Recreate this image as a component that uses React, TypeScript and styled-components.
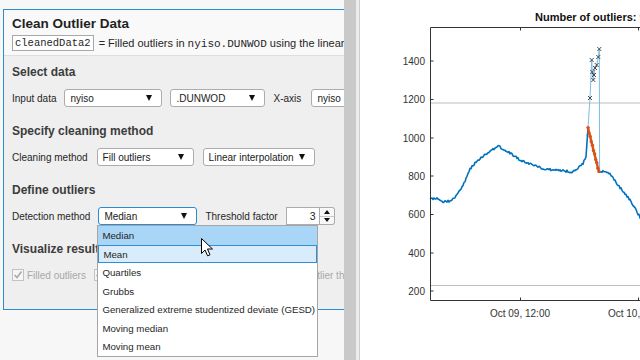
import React from 'react';
import styled, { createGlobalStyle } from 'styled-components';

const GlobalStyle = createGlobalStyle`
  html, body {
    margin: 0;
    padding: 0;
    background: #ffffff;
  }
  body {
    font-family: 'Liberation Sans', Arial, sans-serif;
    color: #262626;
  }
`;

const Page = styled.div`
  display: flex;
  width: 640px;
  height: 360px;
  overflow: hidden;
`;

const LeftPane = styled.div`
  position: relative;
  flex: 0 0 344px;
  height: 100%;
  overflow: hidden;
  box-sizing: border-box;
  padding: 9px 0 0 3px;
  background: #f7f7f7;
`;

const Card = styled.section`
  position: relative;
  height: 301px;
  box-sizing: border-box;
  background: #efefef;
  border: 1px solid #2b8dd0;
  border-right: none;
`;

const Header = styled.header`
  height: 46px;
  box-sizing: border-box;
  padding: 5px 0 3px 8px;
  background: #f9f9f9;
  border-bottom: 1px solid #dedede;
`;

const Title = styled.h1`
  margin: 0;
  font-size: 13.5px;
  line-height: 18px;
  font-weight: bold;
  color: #1f1f1f;
`;

const Summary = styled.div`
  display: flex;
  align-items: center;
  gap: 5px;
  height: 18px;
  margin-top: 1px;
  font-size: 11px;
  white-space: nowrap;
  color: #262626;
`;

const VarBox = styled.span`
  display: inline-block;
  height: 16px;
  line-height: 15px;
  box-sizing: border-box;
  padding: 0 2px;
  border: 1px solid #a8a8a8;
  background: #ffffff;
  font-family: 'Liberation Mono', 'Courier New', monospace;
  font-size: 10.5px;
`;

const Code = styled.span`
  font-family: 'Liberation Mono', 'Courier New', monospace;
  font-size: 11px;
`;

const Body = styled.div`
  padding: 8px 0 0 8px;
`;

const Section = styled.div`
  & + & {
    margin-top: 16px;
  }
`;

const Heading = styled.h2`
  margin: 0;
  font-size: 12px;
  line-height: 16px;
  font-weight: bold;
  color: #3c3c3c;
  white-space: nowrap;
`;

const Row = styled.div<{ $gap: number }>`
  display: flex;
  align-items: center;
  gap: ${(p) => p.$gap}px;
  height: 18px;
  margin-top: 9px;
  white-space: nowrap;
`;

const Label = styled.span<{ $w?: number }>`
  flex: 0 0 ${(p) => (p.$w ? `${p.$w}px` : 'auto')};
  font-size: 10px;
  color: #262626;
`;

const Select = styled.div<{ $w: number; $focus?: boolean }>`
  position: relative;
  flex: 0 0 ${(p) => p.$w}px;
  display: flex;
  align-items: center;
  justify-content: space-between;
  height: 18px;
  box-sizing: border-box;
  padding: 0 5px 0 5px;
  border: 1px solid ${(p) => (p.$focus ? '#2a8ad4' : '#acacac')};
  border-radius: 3px;
  background: #ffffff;
  font-size: 10px;
  color: #1a1a1a;
`;

const Arrow = styled.span`
  width: 0;
  height: 0;
  border-left: 3.5px solid transparent;
  border-right: 3.5px solid transparent;
  border-top: 6px solid #111111;
  margin-right: 4px;
`;

const Spinner = styled.div`
  display: flex;
  height: 18px;
`;

const SpinInput = styled.div`
  width: 34px;
  box-sizing: border-box;
  padding-right: 3px;
  border: 1px solid #acacac;
  background: #ffffff;
  font-size: 10.5px;
  line-height: 16px;
  text-align: right;
`;

const SpinButtons = styled.div`
  display: flex;
  flex-direction: column;
  width: 15px;
  box-sizing: border-box;
  border: 1px solid #acacac;
  border-left: none;
  border-radius: 0 3px 3px 0;
  background: #f8f8f8;
`;

const SpinHalf = styled.div<{ $down?: boolean }>`
  flex: 1;
  display: flex;
  align-items: center;
  justify-content: center;
  border-top: ${(p) => (p.$down ? '1px solid #c8c8c8' : 'none')};

  &::after {
    content: '';
    border-left: 3px solid transparent;
    border-right: 3px solid transparent;
    ${(p) =>
      p.$down ? 'border-top: 4px solid #111;' : 'border-bottom: 4px solid #111;'}
  }
`;

const Menu = styled.ul`
  position: absolute;
  top: 17px;
  left: -2px;
  z-index: 5;
  width: 221px;
  margin: 0;
  padding: 0;
  list-style: none;
  box-sizing: border-box;
  border: 1px solid #a5a5a5;
  background: #ffffff;
`;

const MenuItem = styled.li<{ $state?: 'selected' | 'hover' }>`
  height: 18.5px;
  box-sizing: border-box;
  padding-left: 4px;
  font-size: 9.7px;
  line-height: 18px;
  color: #262626;
  background: ${(p) =>
    p.$state === 'selected' ? '#a9d6f7' : p.$state === 'hover' ? '#d8ecfb' : '#ffffff'};
  border: 1px solid ${(p) => (p.$state === 'hover' ? '#2f8fd9' : 'transparent')};
  border-left-width: ${(p) => (p.$state === 'hover' ? '1px' : '0')};
`;

const Cursor = styled.svg`
  position: absolute;
  left: 102px;
  top: 30px;
  z-index: 6;
`;

const CheckItem = styled.span<{ $ml?: number }>`
  display: inline-flex;
  align-items: center;
  gap: 3px;
  margin-left: ${(p) => p.$ml ?? 0}px;
  font-size: 10px;
  color: #a8a8a8;
`;

const CheckBox = styled.span`
  display: inline-flex;
  align-items: center;
  justify-content: center;
  width: 12px;
  height: 12px;
  box-sizing: border-box;
  border: 1px solid #c2c2c2;
  background: #f6f6f6;
`;

const ScrollTrack = styled.div`
  flex: 0 0 12px;
  background: #c9c9c9;
`;

const Gutter = styled.div`
  flex: 0 0 3px;
  background: #ececec;
  border-right: 1px solid #cdcdcd;
`;

const ChartPane = styled.div`
  flex: 1;
  background: #ffffff;
`;

const Check = () => (
  <CheckBox>
    <svg width="10" height="10" viewBox="0 0 10 10">
      <path d="M1.5 5 L4 7.5 L8.5 1.5" fill="none" stroke="#a8a8a8" strokeWidth="1.6" />
    </svg>
  </CheckBox>
);

// deterministic jitter for the signal
const jitter = (i: number) => {
  const s = Math.sin(i * 127.1 + 11.7) * 43758.5453;
  return (s - Math.floor(s)) * 2 - 1;
};

const interp = (keys: [number, number][], x: number) => {
  for (let k = 0; k < keys.length - 1; k++) {
    const [x0, y0] = keys[k];
    const [x1, y1] = keys[k + 1];
    if (x >= x0 && x <= x1) return y0 + ((y1 - y0) * (x - x0)) / (x1 - x0);
  }
  return keys[keys.length - 1][1];
};

const leftKeys: [number, number][] = [
  [430, 199], [436, 198], [443, 202], [450, 201], [455, 197], [460, 191],
  [465, 181], [470, 169], [476, 162], [483, 156], [490, 151], [498, 146],
  [505, 150], [513, 155], [520, 160], [527, 163], [535, 166], [545, 169],
  [555, 170], [565, 171], [572, 172], [578, 168], [583, 164], [586, 156],
  [588, 128],
];

const rightKeys: [number, number][] = [
  [599, 172], [603, 171], [607, 172], [612, 176], [617, 184], [622, 190],
  [627, 196], [632, 203], [636, 210], [641, 219],
];

const buildLine = (keys: [number, number][], seed: number) => {
  const pts: string[] = [];
  const x0 = keys[0][0];
  const x1 = keys[keys.length - 1][0];
  for (let x = x0; x <= x1; x += 1) {
    const edge = x === x0 || x === x1;
    const y = interp(keys, x) + (edge ? 0 : jitter(x + seed) * 1.1);
    pts.push(`${x},${y.toFixed(1)}`);
  }
  return pts.join(' ');
};

const outlierMarks: [number, number][] = [
  [590, 98], [591.7, 60], [592.3, 72], [593.3, 80], [594, 75], [595, 68],
  [596.7, 65], [598.3, 57], [599.3, 49],
];

const rawLine =
  '587,136 588,128 590,98 591.7,60 592.3,72 593.3,80 594,75 595,68 596.7,65 598.3,57 599.3,49 599.6,171';

const yTicks: [string, number][] = [
  ['1400', 61], ['1200', 99.5], ['1000', 138], ['800', 176],
  ['600', 214.5], ['400', 253], ['200', 291],
];

const Chart = () => {
  const filled = Array.from({ length: 11 }, (_, i) => {
    const t = i / 10;
    return [588 + 11 * t, 128 + 44 * t + (i % 2 ? 0.6 : -0.4)];
  });
  return (
    <svg width="280" height="360" viewBox="360 0 280 360">
      <text x="535" y="21" fontFamily="'Liberation Sans', Arial, sans-serif" fontSize="11" fontWeight="bold" fill="#111">
        Number of outliers: 9
      </text>
      <line x1="430" y1="103" x2="640" y2="103" stroke="#bdbdbd" strokeWidth="1" />
      <line x1="430" y1="285.5" x2="640" y2="285.5" stroke="#bdbdbd" strokeWidth="1" />
      <polyline points={rawLine} fill="none" stroke="#7dbde6" strokeWidth="1" />
      <polyline points={buildLine(leftKeys, 3)} fill="none" stroke="#0072bd" strokeWidth="1.6" strokeLinejoin="round" />
      <polyline points={buildLine(rightKeys, 7)} fill="none" stroke="#0072bd" strokeWidth="1.6" strokeLinejoin="round" />
      <polyline
        points={filled.map((p) => p.join(',')).join(' ')}
        fill="none"
        stroke="#d95319"
        strokeWidth="2.4"
      />
      {filled.map(([x, y], i) => (
        <circle key={i} cx={x} cy={y} r="1.7" fill="#d95319" />
      ))}
      {outlierMarks.map(([x, y], i) => (
        <path
          key={i}
          d={`M${x - 2} ${y - 2} L${x + 2} ${y + 2} M${x - 2} ${y + 2} L${x + 2} ${y - 2}`}
          stroke="#3a3a3a"
          strokeWidth="0.9"
        />
      ))}
      <g stroke="#333" strokeWidth="1" fill="none">
        <path d="M430.5 27.5 H640 M430.5 27.5 V300.5 H640" />
        {yTicks.map(([, y]) => (
          <line key={y} x1="430.5" y1={y} x2="433.5" y2={y} />
        ))}
        <line x1="520.5" y1="300.5" x2="520.5" y2="297.5" />
        <line x1="638.5" y1="300.5" x2="638.5" y2="297.5" />
        <line x1="520.5" y1="27.5" x2="520.5" y2="30.5" />
        <line x1="638.5" y1="27.5" x2="638.5" y2="30.5" />
      </g>
      <g fontFamily="'Liberation Sans', Arial, sans-serif" fontSize="10" fill="#333">
        {yTicks.map(([t, y]) => (
          <text key={t} x="425" y={y + 3.5} textAnchor="end">
            {t}
          </text>
        ))}
        <text x="520" y="317" textAnchor="middle">Oct 09, 12:00</text>
        <text x="638" y="317" textAnchor="middle">Oct 10, 00:00</text>
      </g>
    </svg>
  );
};

const detectionMethods = [
  'Median',
  'Mean',
  'Quartiles',
  'Grubbs',
  'Generalized extreme studentized deviate (GESD)',
  'Moving median',
  'Moving mean',
];

export default function App() {
  return (
    <>
      <GlobalStyle />
      <Page>
        <LeftPane>
          <Card>
            <Header>
              <Title>Clean Outlier Data</Title>
              <Summary>
                <VarBox>cleanedData2</VarBox>
                <span>
                  = Filled outliers in <Code>nyiso.DUNWOD</Code> using the linear interpolation method
                </span>
              </Summary>
            </Header>
            <Body>
              <Section>
                <Heading>Select data</Heading>
                <Row $gap={8}>
                  <Label $w={42}>Input data</Label>
                  <Select $w={98}>
                    nyiso
                    <Arrow />
                  </Select>
                  <Select $w={95}>
                    .DUNWOD
                    <Arrow />
                  </Select>
                  <Label $w={30}>X-axis</Label>
                  <Select $w={80}>
                    nyiso
                    <Arrow />
                  </Select>
                </Row>
              </Section>
              <Section>
                <Heading>Specify cleaning method</Heading>
                <Row $gap={9}>
                  <Label $w={75}>Cleaning method</Label>
                  <Select $w={97}>
                    Fill outliers
                    <Arrow />
                  </Select>
                  <Select $w={112}>
                    Linear interpolation
                    <Arrow />
                  </Select>
                </Row>
              </Section>
              <Section>
                <Heading>Define outliers</Heading>
                <Row $gap={8}>
                  <Label $w={77}>Detection method</Label>
                  <Select $w={99} $focus>
                    Median
                    <Arrow />
                    <Menu>
                      {detectionMethods.map((m, i) => (
                        <MenuItem key={m} $state={i === 0 ? 'selected' : i === 1 ? 'hover' : undefined}>
                          {m}
                        </MenuItem>
                      ))}
                    </Menu>
                    <Cursor width="13" height="19" viewBox="0 0 13 19">
                      <path
                        d="M0.5 0.5 L0.5 15.5 L4 12 L6.6 17.8 L9 16.8 L6.5 11 L11.5 11 Z"
                        fill="#ffffff"
                        stroke="#000000"
                        strokeWidth="1"
                        strokeLinejoin="round"
                      />
                    </Cursor>
                  </Select>
                  <Label $w={72}>Threshold factor</Label>
                  <Spinner>
                    <SpinInput>3</SpinInput>
                    <SpinButtons>
                      <SpinHalf />
                      <SpinHalf $down />
                    </SpinButtons>
                  </Spinner>
                </Row>
              </Section>
              <Section>
                <Heading>Visualize results</Heading>
                <Row $gap={8}>
                  <CheckItem>
                    <Check />
                    Filled outliers
                  </CheckItem>
                  <CheckItem>
                    <Check />
                    Cleaned data
                  </CheckItem>
                  <CheckItem $ml={4}>
                    <Check />
                    Outliers
                  </CheckItem>
                  <CheckItem $ml={51}>
                    <Check />
                    Outlier thresholds
                  </CheckItem>
                </Row>
              </Section>
            </Body>
          </Card>
        </LeftPane>
        <ScrollTrack />
        <Gutter />
        <ChartPane>
          <Chart />
        </ChartPane>
      </Page>
    </>
  );
}
